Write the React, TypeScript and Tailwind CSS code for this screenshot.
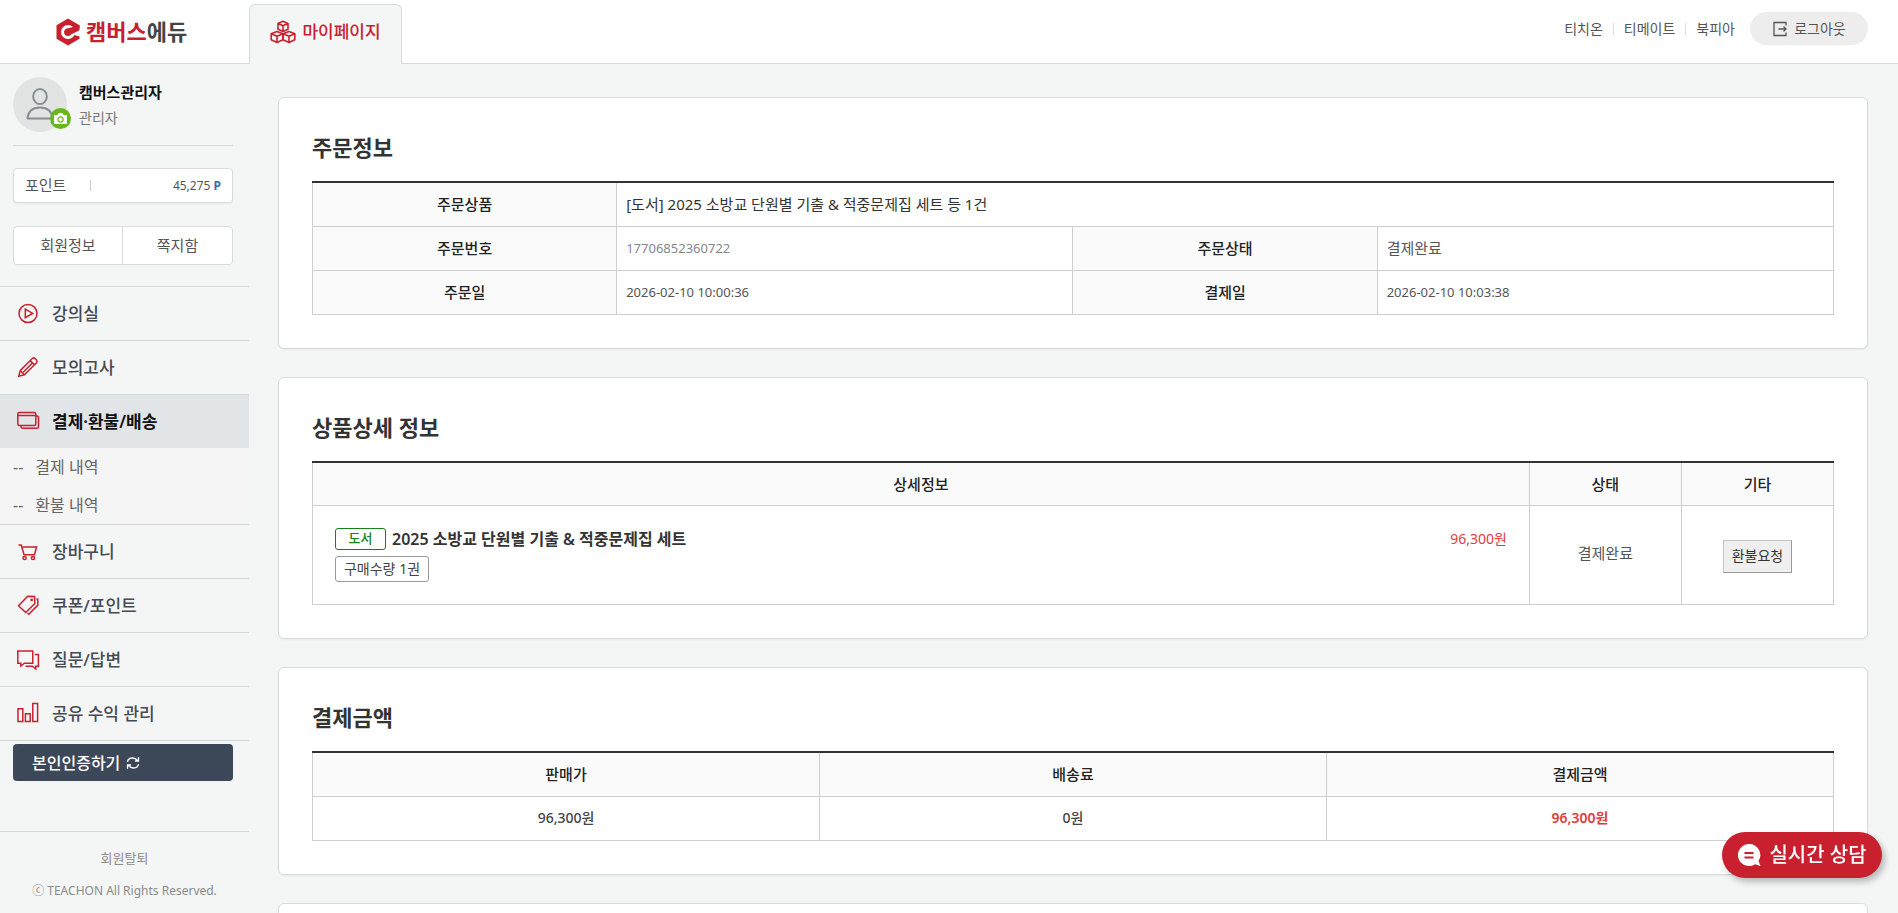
import type { ReactNode } from "react";

interface MenuEntry {
  label: string;
  icon: ReactNode;
  active?: boolean;
  children?: string[];
}

const MENU: MenuEntry[] = [
  {
    label: "강의실",
    icon: (
      <>
        <circle cx="12" cy="11.5" r="9" />
        <path d="M9.3 7.1v8.6l7.4-4.3z" />
      </>
    ),
  },
  {
    label: "모의고사",
    icon: (
      <>
        <path d="M2.8 20.2l1.4-5.6L16.3 2.5q1.4-1.2 2.8 0l1.4 1.4q1.2 1.4 0 2.8L8.4 18.8z" />
        <path d="M4.2 14.6l4.2 4.2M14.2 4.6l4.2 4.2M7.2 16.2l9.2-9.2" />
      </>
    ),
  },
  {
    label: "결제·환불/배송",
    active: true,
    icon: (
      <>
        <rect x="1.8" y="2.5" width="18" height="13" rx="1.5" />
        <path d="M1.8 5.5h18M20 6h1.2q1.3 0 1.3 1.3v9.4q0 1.6-1.6 1.6H6.6q-1.6 0-1.6-1.6V15.5" />
      </>
    ),
    children: ["결제 내역", "환불 내역"],
  },
  {
    label: "장바구니",
    icon: (
      <>
        <path d="M2.5 5h2.7l2.9 9.8h10.4L20.6 7H6" />
        <circle cx="8.6" cy="18" r="1.6" />
        <circle cx="17" cy="18" r="1.6" />
      </>
    ),
  },
  {
    label: "쿠폰/포인트",
    icon: (
      <>
        <path d="M2.5 11.7l9.2-9.4 6.8.2.4 7-9.2 9z" />
        <path d="M20.4 4.9h1.3l.2 6.2-9.1 9.1-1.3-1.1" />
        <circle cx="15.7" cy="5.9" r=".6" />
      </>
    ),
  },
  {
    label: "질문/답변",
    icon: (
      <>
        <path d="M1.8 3h15v12.2H8.4L4.8 18v-2.8h-3z" />
        <path d="M18.8 6.5h3.6v11.7h-2.6V21l-3.4-2.8H9.6" />
      </>
    ),
  },
  {
    label: "공유 수익 관리",
    icon: <path d="M2 6.7h4.8v12.9H2zM9.4 11.7h4.8v7.9H9.4zM16.8 1.5h4.8v18.1h-4.8z" />,
  },
];

const TOP_LINKS = ["티치온", "티메이트", "북피아"];

const th = "border border-[#cfcfd1] bg-[#fafafa] text-[15px] font-medium text-[#222] text-center";
const td = "border border-[#cfcfd1]";

function Logo() {
  return (
    <a href="#" className="flex items-center gap-1.5 text-[22px] font-bold text-[#c8202f]">
      <svg className="w-6 h-7" viewBox="0 0 24 28">
        <path d="M12 .5l11.5 6.7v13.6L12 27.5.5 20.8V7.2z" fill="#c8202f" />
        <circle cx="12" cy="14" r="7" fill="#fff" />
        <path d="M13 14l11-4v8.5L18 17z" fill="#fff" />
        <path d="M12 10.3a3.9 3.9 0 1 0 3 6.3l8.5-4.3V7L19 8.5z" fill="#c8202f" />
      </svg>
      <span>
        캠버스<span className="text-[#444]">에듀</span>
      </span>
    </a>
  );
}

function Header() {
  return (
    <header className="flex h-16 shrink-0">
      <div className="w-[249px] shrink-0 flex items-center bg-white border-b border-[#d9dbdb] pl-14">
        <Logo />
      </div>
      <div className="bg-white pt-1 flex">
        <a
          href="#"
          className="w-[153px] flex items-center justify-center gap-1.5 pb-1.5 rounded-t-md border border-b-0 border-[#d9dbdb] bg-[#f4f6f6] text-[17px] font-medium text-[#c8202f]"
        >
          <svg className="w-[26px] h-6" viewBox="0 0 26 24" fill="none" stroke="currentColor" strokeWidth="1.6" strokeLinejoin="round">
            <path d="M13 1.2l5 2.2v5.8l-5 2.3-5-2.3V3.4zM8 3.4l5 2.3 5-2.3M13 5.7v5.8" />
            <path d="M7 11.5l6 2.3v6l-6 2.6-5.8-2.6v-6zM1.2 13.8L7 16.2l6-2.4M7 16.2v6.2" />
            <path d="M19 11.5l5.8 2.3v6L19 22.4l-6-2.6v-6zM13 13.8l6 2.4 5.8-2.4M19 16.2v6.2" />
          </svg>
          마이페이지
        </a>
      </div>
      <nav className="flex-1 flex items-center justify-end bg-white border-b border-[#d9dbdb] pr-[30px] pb-1.5 text-sm text-[#555]">
        <ul className="flex items-center">
          {TOP_LINKS.map((label, i) => (
            <li key={label} className="flex items-center">
              {i > 0 && <span className="w-px h-3 mx-2.5 bg-[#ddd]" />}
              <a href="#">{label}</a>
            </li>
          ))}
        </ul>
        <button className="ml-[15px] flex items-center justify-center gap-1.5 w-[118px] h-[33px] rounded-full bg-[#ededed]">
          <svg className="w-4 h-4" viewBox="0 0 16 16" fill="none" stroke="currentColor" strokeWidth="1.3">
            <path d="M14 4.5V1.5H2v13h12v-3M6.5 8H14M11.5 5.5L14 8l-2.5 2.5" />
          </svg>
          로그아웃
        </button>
      </nav>
    </header>
  );
}

function Profile() {
  return (
    <div className="ml-[13px] mr-4 pt-[13px] pb-[13px] flex gap-3 border-b border-[#d5d8d9]">
      <div className="relative w-[54px] h-[55px] rounded-full bg-[#e2e3e3]">
        <svg className="w-full h-full" viewBox="0 0 54 54" fill="none" stroke="#868e96" strokeWidth="2">
          <ellipse cx="27" cy="19" rx="6.8" ry="7.5" />
          <path d="M14.5 41q1-11 12.5-11t12.5 11z" strokeLinejoin="round" />
        </svg>
        <button
          aria-label="사진 변경"
          className="absolute -right-1 bottom-[3px] w-[21px] h-[21px] rounded-full bg-[#69b61d] flex items-center justify-center"
        >
          <svg className="w-[13px] h-3" viewBox="0 0 13 12" fill="#fff">
            <path d="M1 2h2.5L4.5 0h4l1 2H12q1 0 1 1v7q0 1-1 1H1q-1 0-1-1V3q0-1 1-1z" />
            <circle cx="6.5" cy="6.5" r="2.6" fill="#fff" stroke="#69b61d" strokeWidth="1.2" />
          </svg>
        </button>
      </div>
      <div className="pt-[3px]">
        <p className="text-[15px] leading-6 font-semibold text-[#111]">캠버스관리자</p>
        <p className="text-sm leading-7 text-[#777]">관리자</p>
      </div>
    </div>
  );
}

function Sidebar() {
  return (
    <aside className="w-[249px] shrink-0">
      <Profile />
      <div className="ml-[13px] mr-4 mt-[22px] h-[35px] px-[11px] flex items-center rounded border border-[#d9dbdb] bg-white shadow-xs text-[#555]">
        <span className="text-[15px]">포인트</span>
        <span className="w-px h-[11px] ml-6 bg-[#ccc]" />
        <span className="ml-auto text-xs">
          45,275 <b className="text-[#3b6eae]">P</b>
        </span>
      </div>
      <div className="ml-[13px] mr-4 mt-[23px] h-[39px] grid grid-cols-2 rounded border border-[#d9dbdb] bg-white text-[15px] text-[#555]">
        <a href="#" className="flex items-center justify-center border-r border-[#d9dbdb]">회원정보</a>
        <a href="#" className="flex items-center justify-center">쪽지함</a>
      </div>

      <ul className="mt-[21px] border-b border-[#d5d8d9]">
        {MENU.map((m) => (
          <li key={m.label} className="border-t border-[#d5d8d9]">
            <a
              href="#"
              className={
                m.active
                  ? "h-[53px] pl-4 flex items-center gap-3 text-[17px] font-semibold bg-[#e2e5e8] text-[#111]"
                  : "h-[53px] pl-4 flex items-center gap-3 text-[17px] font-medium text-[#444b55]"
              }
            >
              <svg className="w-6 h-6" viewBox="0 0 24 24" fill="none" stroke="#c8202f" strokeWidth="1.5">
                {m.icon}
              </svg>
              {m.label}
            </a>
            {m.children && (
              <ul className="bg-[#f5f5f5] text-base text-[#666]">
                {m.children.map((c) => (
                  <li key={c}>
                    <a href="#" className="h-[38px] pl-[13px] flex items-center gap-3">
                      <span>--</span>
                      {c}
                    </a>
                  </li>
                ))}
              </ul>
            )}
          </li>
        ))}
      </ul>
      <div className="pl-[13px] pr-4 pt-[3px]">
        <button className="w-full h-[37px] pl-[19px] flex items-center gap-1.5 rounded bg-[#3c4858] text-base font-medium text-white">
          본인인증하기
          <svg className="w-3.5 h-3.5" viewBox="0 0 14 14" fill="none" stroke="currentColor" strokeWidth="1.3">
            <path d="M1.5 6q.5-4 5-4 3 0 5 2.5M12.5 1v4H9M12.5 8q-.5 4-5 4-3 0-5-2.5M1.5 13V9H5" />
          </svg>
        </button>
      </div>

      <footer className="mt-[50px] pt-4 border-t border-[#d5d8d9] text-center text-[#8b8b8b]">
        <a href="#" className="block text-[13px] leading-5">회원탈퇴</a>
        <p className="mt-[13px] text-xs leading-5">ⓒ TEACHON All Rights Reserved.</p>
      </footer>
    </aside>
  );
}

function Card({ title, children }: { title: string; children: ReactNode }) {
  return (
    <section className="shrink-0 rounded-md border border-[#d9dbdb] bg-white shadow-xs px-[33px] pt-[31px] pb-[33px]">
      <h2 className="mb-4 text-[22px] leading-9 font-semibold text-[#333]">{title}</h2>
      {children}
    </section>
  );
}

function OrderInfo() {
  return (
    <Card title="주문정보">
      <table className="w-full table-fixed border-collapse text-[13px] text-[#555]">
        <colgroup>
          <col className="w-1/5" />
          <col className="w-[30%]" />
          <col className="w-1/5" />
          <col className="w-[30%]" />
        </colgroup>
        <tbody>
          <tr className="h-11">
            <th className={`${th} border-t-2 border-t-[#303236]`}>주문상품</th>
            <td colSpan={3} className={`${td} border-t-2 border-t-[#303236] px-[9px] text-[15px] text-[#333]`}>
              [도서] 2025 소방교 단원별 기출 &amp; 적중문제집 세트 등 1건
            </td>
          </tr>
          <tr className="h-11">
            <th className={th}>주문번호</th>
            <td className={`${td} px-[9px] pt-0.5 text-[#888]`}>17706852360722</td>
            <th className={th}>주문상태</th>
            <td className={`${td} px-[9px] text-[15px]`}>결제완료</td>
          </tr>
          <tr className="h-11">
            <th className={th}>주문일</th>
            <td className={`${td} px-[9px] pt-0.5`}>2026-02-10 10:00:36</td>
            <th className={th}>결제일</th>
            <td className={`${td} px-[9px] pt-0.5`}>2026-02-10 10:03:38</td>
          </tr>
        </tbody>
      </table>
    </Card>
  );
}

function ProductDetail() {
  return (
    <Card title="상품상세 정보">
      <table className="w-full table-fixed border-collapse text-[15px] text-[#555]">
        <colgroup>
          <col className="w-4/5" />
          <col className="w-1/10" />
          <col className="w-1/10" />
        </colgroup>
        <thead>
          <tr className="h-11">
            <th className={`${th} border-t-2 border-t-[#303236]`}>상세정보</th>
            <th className={`${th} border-t-2 border-t-[#303236]`}>상태</th>
            <th className={`${th} border-t-2 border-t-[#303236]`}>기타</th>
          </tr>
        </thead>
        <tbody>
          <tr className="h-[99px]">
            <td className={`${td} px-[22px] pt-[21px] align-top`}>
              <div className="flex items-center">
                <span className="w-[51px] h-[22px] flex items-center justify-center rounded-[3px] border border-[#188018] text-[13px] font-medium text-[#188018]">
                  도서
                </span>
                <strong className="ml-1.5 text-base leading-6 font-semibold text-[#333]">
                  2025 소방교 단원별 기출 &amp; 적중문제집 세트
                </strong>
                <span className="ml-auto text-sm text-[#e03c3c]">96,300원</span>
              </div>
              <span className="mt-[5px] w-[94px] h-[26px] flex items-center justify-center rounded-[3px] border border-[#999] text-sm text-[#444]">
                구매수량 1권
              </span>
            </td>
            <td className={`${td} pb-1 text-center`}>결제완료</td>
            <td className={`${td} text-center`}>
              <button className="mt-0.5 px-2 h-[33px] border border-[#c4c4c4] border-r-[#999] border-b-[#999] bg-[#efefef] text-sm text-[#333]">
                환불요청
              </button>
            </td>
          </tr>
        </tbody>
      </table>
    </Card>
  );
}

function PaymentAmount() {
  return (
    <Card title="결제금액">
      <table className="w-full table-fixed border-collapse text-sm text-[#444]">
        <thead>
          <tr className="h-11">
            <th className={`${th} border-t-2 border-t-[#303236]`}>판매가</th>
            <th className={`${th} border-t-2 border-t-[#303236]`}>배송료</th>
            <th className={`${th} border-t-2 border-t-[#303236]`}>결제금액</th>
          </tr>
        </thead>
        <tbody>
          <tr className="h-11 text-center font-medium">
            <td className={td}>96,300원</td>
            <td className={td}>0원</td>
            <td className={`${td} font-semibold text-[#e03c3c]`}>96,300원</td>
          </tr>
        </tbody>
      </table>
    </Card>
  );
}

export default function App() {
  return (
    <div className="h-screen overflow-hidden flex flex-col bg-[#f4f6f6] font-['Noto_Sans','Noto_Sans_CJK_KR',sans-serif]">
      <Header />
      <div className="flex flex-1 min-h-0">
        <Sidebar />
        <main className="flex-1 min-w-0 flex flex-col gap-7 pt-[33px] pl-[29px] pr-[30px] overflow-hidden">
          <OrderInfo />
          <ProductDetail />
          <PaymentAmount />
          <section className="shrink-0 h-40 rounded-md border border-[#d9dbdb] bg-white" />
        </main>
      </div>

      <button className="fixed right-4 bottom-[35px] w-[160px] h-[46px] flex items-center justify-center gap-2 rounded-full bg-[#c8202f] text-xl font-medium text-white shadow-[3px_4px_6px_rgba(0,0,0,0.25)]">
        <svg className="w-6 h-6" viewBox="0 0 24 24">
          <path d="M12 1a11 11 0 1 0 6 20.2L23.5 23l-2-5A11 11 0 0 0 12 1z" fill="#fff" />
          <path d="M7.5 10h9M7.5 14.5h9" stroke="#c8202f" strokeWidth="2.2" />
        </svg>
        실시간 상담
      </button>
    </div>
  );
}
